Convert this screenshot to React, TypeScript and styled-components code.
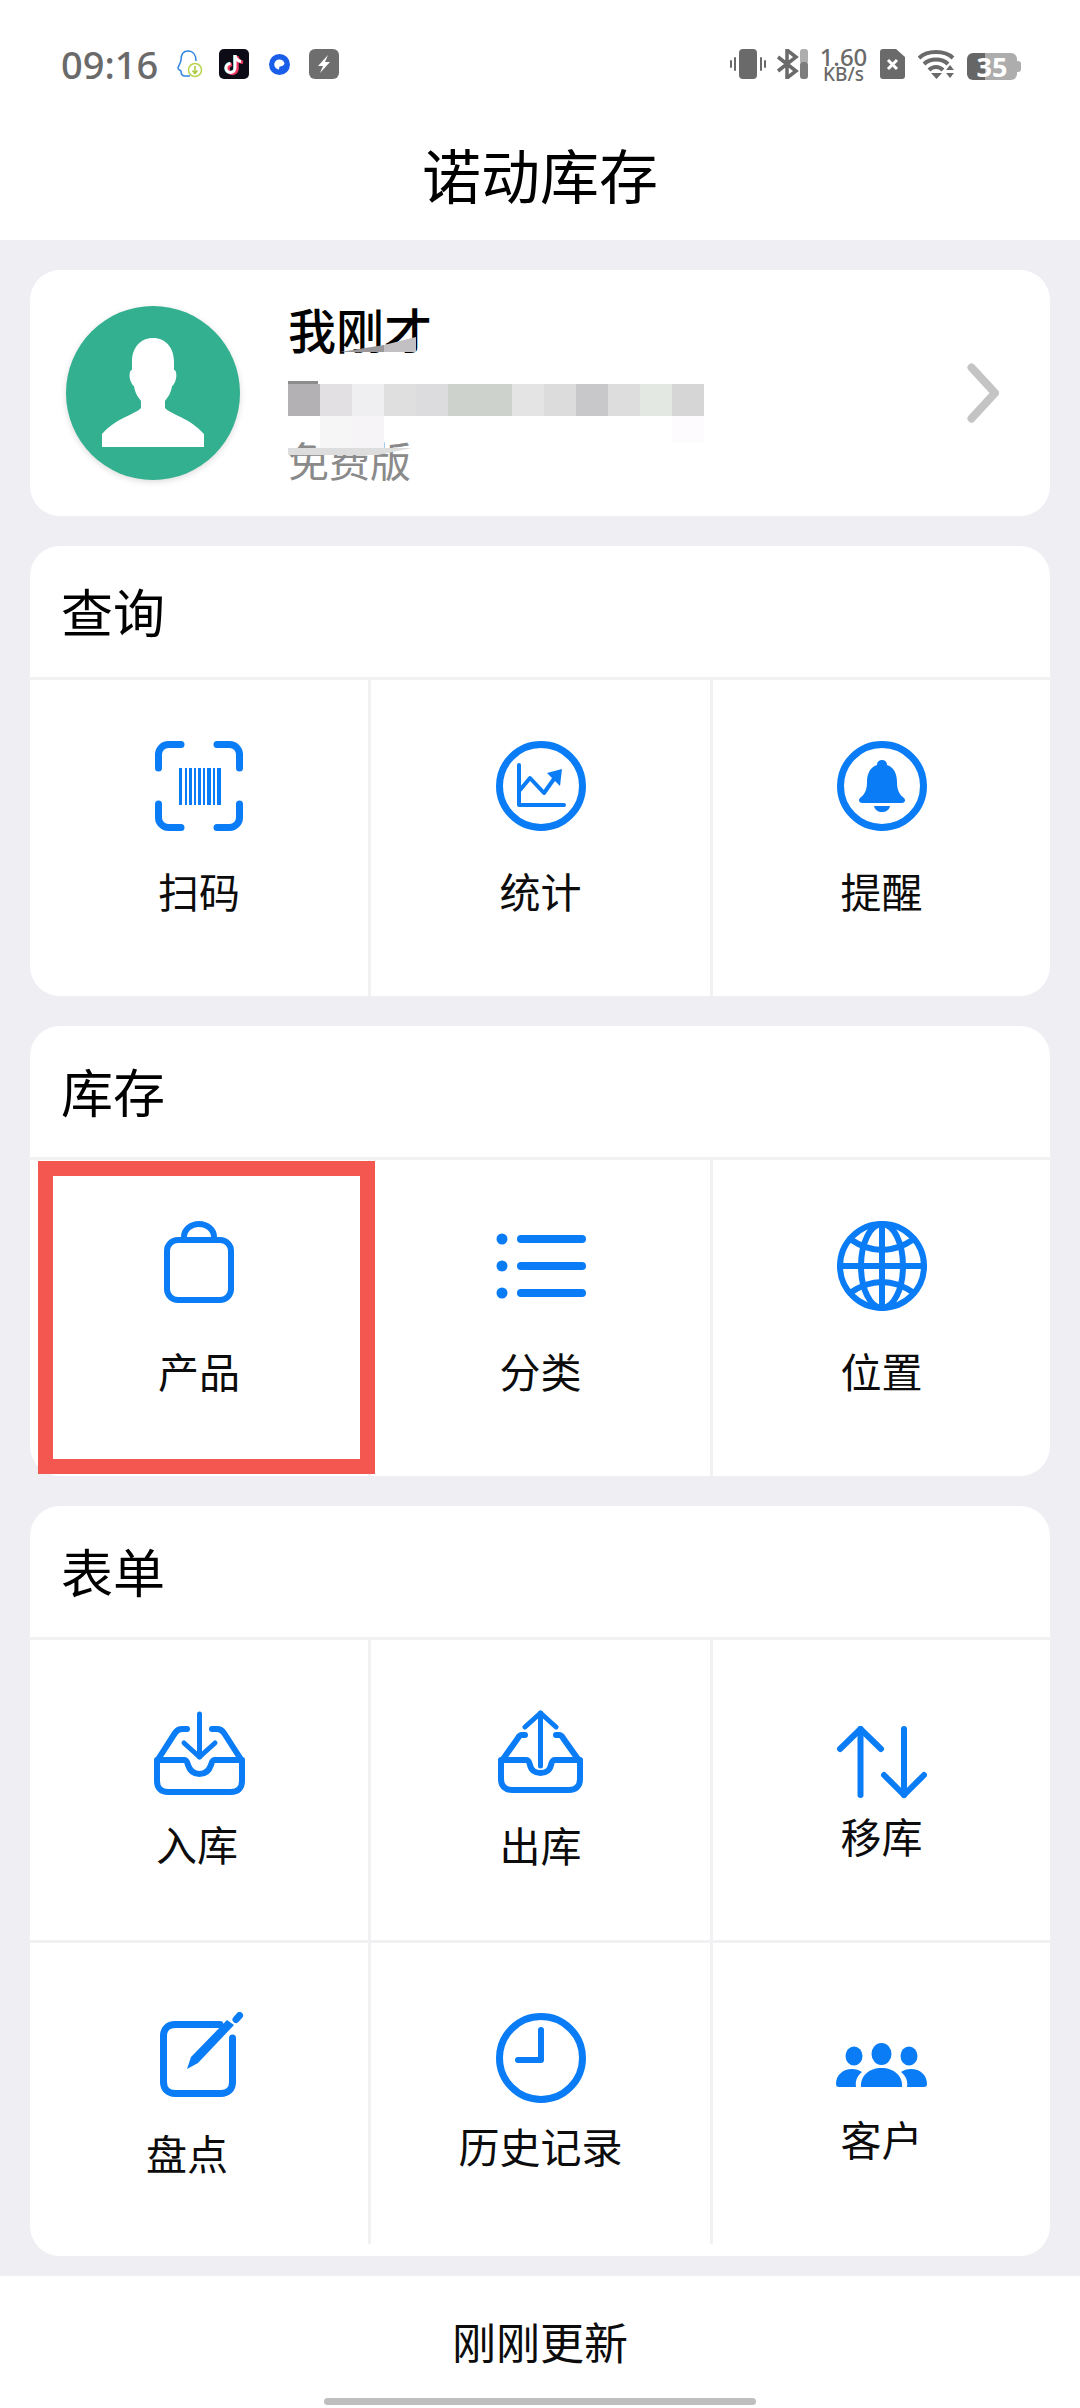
import React from "react";
import styled, { createGlobalStyle } from "styled-components";

const BLUE = "#0a7cf6";
const LINE = "#f1f1f4";
const CJK = `"Noto Sans CJK SC", "Noto Sans", sans-serif`;

const GlobalStyle = createGlobalStyle`
    html, body {
        margin: 0;
        padding: 0;
        background: #fff;
    }
    * {
        box-sizing: border-box;
    }
`;

const PAGE = styled.div`
    width: 1080px;
    height: 2408px;
    overflow: hidden;
    display: flex;
    flex-direction: column;
    background-color: #eeeef3;
    font-family: ${CJK};
    color: #000;
`;

const HEADER = styled.header`
    height: 240px;
    background-color: #fff;
    display: flex;
    flex-direction: column;
`;

const STATUS_BAR = styled.div`
    height: 128px;
    padding: 0 59px 0 61px;
    display: flex;
    align-items: center;
    justify-content: space-between;
    color: #6a6a6a;
    font-family: "Noto Sans", sans-serif;
`;

const STATUS_GROUP = styled.div`
    display: flex;
    align-items: center;
`;

const CLOCK = styled.span`
    font-size: 38px;
    line-height: 34px;
    font-weight: 500;
    width: 97px;
    white-space: nowrap;
`;

const STATUS_ICON = styled.svg<{ $left: number }>`
    display: block;
    flex: none;
    margin-left: ${props => props.$left}px;
`;

const SPEED = styled.div`
    width: 45px;
    margin-left: 13px;
    display: flex;
    flex-direction: column;
    align-items: center;
    font-weight: 500;
    white-space: nowrap;
    .rate {
        font-size: 24px;
        line-height: 20px;
    }
    .unit {
        font-size: 19px;
        line-height: 15px;
    }
`;

const BATTERY = styled.div`
    position: relative;
    width: 50px;
    height: 27px;
    margin-left: 12px;
    margin-right: 4px;
    margin-top: 4px;
    border-radius: 6px;
    background: linear-gradient(90deg, #666 0 36%, #adadad 36% 100%);
    color: #fff;
    font-size: 27px;
    font-weight: 700;
    line-height: 27px;
    text-align: center;
    &::after {
        content: "";
        position: absolute;
        right: -4px;
        top: 8px;
        width: 4px;
        height: 11px;
        border-radius: 0 3px 3px 0;
        background-color: #adadad;
    }
`;

const TITLE = styled.h1`
    margin: 0;
    height: 112px;
    padding-bottom: 22px;
    display: flex;
    align-items: center;
    justify-content: center;
    font-size: 59px;
    font-weight: 400;
`;

const MAIN = styled.main`
    flex: 1;
    padding: 30px 30px 0;
    display: flex;
    flex-direction: column;
    gap: 30px;
`;

const CARD = styled.section`
    position: relative;
    background-color: #fff;
    border-radius: 30px;
`;

const PROFILE = styled(CARD)`
    height: 246px;
    padding: 36px 30px 0 36px;
    display: flex;
    align-items: flex-start;
`;

const AVATAR = styled.div`
    width: 174px;
    height: 174px;
    flex: none;
    border-radius: 50%;
    background-color: #32b08f;
    box-shadow: 0 2px 6px rgba(0, 0, 0, 0.14);
    svg {
        display: block;
    }
`;

const PROFILE_TEXT = styled.div`
    margin-left: 48px;
    margin-top: -8px;
    flex: 1;
    display: flex;
    flex-direction: column;
    .name {
        font-size: 48px;
        line-height: 60px;
        font-weight: 500;
        color: #000;
    }
    .plan {
        margin-top: 76px;
        font-size: 41px;
        line-height: 50px;
        color: #8a8a8a;
    }
`;

const MOSAIC = styled.svg`
    position: absolute;
    left: 258px;
    top: 65px;
`;

const CHEVRON = styled.svg`
    flex: none;
    margin-top: 57px;
    margin-right: 20px;
`;

const SECTION_TITLE = styled.h2`
    margin: 0;
    height: 134px;
    padding: 0 0 3px 31px;
    display: flex;
    align-items: center;
    font-size: 52px;
    font-weight: 400;
    border-bottom: 3px solid ${LINE};
`;

const GRID = styled.div`
    display: grid;
    grid-template-columns: 341px 342px 337px;
`;

const FORM_GRID = styled(GRID)`
    padding-bottom: 12px;
`;

const CELL = styled.div<{ $height: number; $pad: number; $ruled?: boolean; $last?: boolean }>`
    position: relative;
    height: ${props => props.$height}px;
    padding-top: ${props => props.$pad}px;
    display: flex;
    flex-direction: column;
    align-items: center;
    border-right: ${props => (props.$last ? "none" : `3px solid ${LINE}`)};
    border-bottom: ${props => (props.$ruled ? `3px solid ${LINE}` : "none")};
`;

const ICON = styled.svg<{ $nudge?: number }>`
    display: block;
    flex: none;
    margin-left: ${props => props.$nudge || 0}px;
    color: ${BLUE};
`;

const LABEL = styled.span<{ $gap: number; $shift?: number }>`
    margin-top: ${props => props.$gap}px;
    margin-left: ${props => props.$shift || 0}px;
    font-size: 41px;
    line-height: 52px;
    color: #0c0c0c;
    white-space: nowrap;
`;

const HIGHLIGHT = styled.div`
    position: absolute;
    left: 8px;
    top: 1px;
    width: 337px;
    height: 313px;
    border: 15px solid #f4574f;
`;

const FOOTER = styled.footer`
    height: 132px;
    background-color: #fff;
    padding-top: 35px;
    display: flex;
    flex-direction: column;
    align-items: center;
    .updated {
        font-size: 44px;
        line-height: 60px;
        color: #0c0c0c;
    }
`;

const HOME_BAR = styled.div`
    margin-top: 27px;
    width: 432px;
    height: 7px;
    border-radius: 4px;
    background-color: #bfbfbf;
`;

const stroke = { fill: "none", stroke: "currentColor", strokeLinecap: "round" as const, strokeLinejoin: "round" as const };

const ScanIcon = () => (
    <ICON width="88" height="90" viewBox="0 0 88 90">
        <g {...stroke} strokeWidth="7">
            <path d="M3.5 27V14A10 10 0 0 1 13.5 3.5H26" />
            <path d="M62 3.5H74.5A10 10 0 0 1 84.5 14V27" />
            <path d="M3.5 63V76A10 10 0 0 0 13.5 86.5H26" />
            <path d="M62 86.5H74.5A10 10 0 0 0 84.5 76V63" />
        </g>
        <g fill="currentColor">
            <rect x="24" y="27" width="3" height="37" />
            <rect x="30" y="27" width="2" height="37" />
            <rect x="34" y="27" width="3" height="37" />
            <rect x="39" y="27" width="2" height="37" />
            <rect x="43" y="27" width="3" height="37" />
            <rect x="48" y="27" width="2" height="37" />
            <rect x="52" y="27" width="4" height="37" />
            <rect x="58" y="27" width="2" height="37" />
            <rect x="62" y="27" width="4" height="37" />
        </g>
    </ICON>
);

const StatsIcon = () => (
    <ICON width="90" height="90" viewBox="0 0 90 90">
        <circle cx="45" cy="45" r="41.5" {...stroke} strokeWidth="7" />
        <path d="M23 24V64H68" {...stroke} strokeWidth="4" />
        <path d="M24 49L34 37L48 52L60 35" {...stroke} strokeWidth="4" />
        <path d="M51 32L66 28L64 45Z" fill="currentColor" />
    </ICON>
);

const BellIcon = () => (
    <ICON width="90" height="90" viewBox="0 0 90 90">
        <circle cx="45" cy="45" r="41.5" {...stroke} strokeWidth="7" />
        <path
            d="M45 19C48 19 50 21 50 24C57 26 60 33 60 41C60 50 63 54 67 57C69 59 68 62 65 62H25C22 62 21 59 23 57C27 54 30 50 30 41C30 33 33 26 40 24C40 21 42 19 45 19Z"
            fill="currentColor"
        />
        <path d="M37 65H53C52 69 49 71 45 71C41 71 38 69 37 65Z" fill="currentColor" />
    </ICON>
);

const BagIcon = () => (
    <ICON width="70" height="90" viewBox="0 0 70 90">
        <rect x="3" y="19" width="64" height="60" rx="11" {...stroke} strokeWidth="6" />
        <path d="M20 18V16A15 13 0 0 1 50 16V18" {...stroke} strokeWidth="6" />
    </ICON>
);

const ListIcon = () => (
    <ICON width="91" height="90" viewBox="0 0 91 90">
        <g fill="currentColor">
            <circle cx="7" cy="18" r="5.500" />
            <circle cx="7" cy="45" r="5.500" />
            <circle cx="7" cy="72" r="5.500" />
        </g>
        <g {...stroke} strokeWidth="8">
            <path d="M26 18H87" />
            <path d="M26 45H87" />
            <path d="M26 72H87" />
        </g>
    </ICON>
);

const GlobeIcon = () => (
    <ICON width="90" height="90" viewBox="0 0 90 90">
        <g {...stroke} strokeWidth="6">
            <circle cx="45" cy="45" r="42" />
            <ellipse cx="45" cy="45" rx="21" ry="42" />
            <path d="M45 3V87" />
            <path d="M3 45H87" />
            <path d="M13 18Q45 40 77 18" />
            <path d="M13 72Q45 50 77 72" />
        </g>
    </ICON>
);

const InboxIcon = () => (
    <ICON width="91" height="84" viewBox="0 0 91 84">
        <g {...stroke} strokeWidth="6">
            <path d="M33 18H28C25 18 23 19 21 22L3 50V70C3 77 7 81 14 81H77C84 81 88 77 88 70V50L70 22C68 19 66 18 63 18H58" />
            <path d="M3 49H30C33 49 33 51 34 54C36 60 40 63 45.5 63C51 63 55 60 57 54C58 51 58 49 61 49H88" />
        </g>
        <g {...stroke} strokeWidth="5">
            <path d="M45.500 3V46" />
            <path d="M30 32L45.500 46L61 32" />
        </g>
    </ICON>
);

const OutboxIcon = () => (
    <ICON width="85" height="83" viewBox="0 0 85 83">
        <g {...stroke} strokeWidth="6">
            <path d="M27 25H24C22 25 21 26 20 28L3 52V69C3 76 7 80 14 80H71C78 80 82 76 82 69V52L65 28C64 26 63 25 61 25H58" />
            <path d="M3 50H28C31 50 31 52 32 55C33 60 37 63 42.500 63C48 63 52 60 53 55C54 52 54 50 57 50H82" />
        </g>
        <g {...stroke} strokeWidth="5">
            <path d="M42.500 3V56" />
            <path d="M27 17L42.500 3L58 17" />
        </g>
    </ICON>
);

const SwapIcon = () => (
    <ICON width="90" height="72" viewBox="0 0 90 72">
        <g {...stroke} strokeWidth="6">
            <path d="M23.500 3V69" />
            <path d="M3 23L23.500 3L44 23" />
            <path d="M67 3V69" />
            <path d="M47 49L67 69L87 49" />
        </g>
    </ICON>
);

const NoteIcon = () => (
    <ICON width="84" height="85" viewBox="0 0 84 85" $nudge={6}>
        <path d="M60 12.500H15C8 12.500 3.500 17 3.500 24V70C3.500 77 8 81.500 15 81.500H61C68 81.500 72.500 77 72.500 70V26" {...stroke} strokeWidth="7" />
        <path d="M67 8L74 13L38 51L27 57L31 45Z" fill="currentColor" />
        <path d="M76 7.500L79.500 3.500" {...stroke} strokeWidth="7" />
    </ICON>
);

const ClockIcon = () => (
    <ICON width="90" height="90" viewBox="0 0 90 90">
        <circle cx="45" cy="45" r="41.5" {...stroke} strokeWidth="7" />
        <path d="M45 17V47H22" {...stroke} strokeWidth="6" />
    </ICON>
);

const PeopleIcon = () => (
    <ICON width="91" height="44" viewBox="0 0 91 44">
        <g fill="currentColor">
            <ellipse cx="45.500" cy="11" rx="10" ry="11" />
            <ellipse cx="18" cy="13" rx="8.500" ry="9.500" />
            <ellipse cx="73" cy="13" rx="8.500" ry="9.500" />
            <path d="M25 44C24 33 33 25 45.500 25C58 25 67 33 66 44Z" />
            <path d="M0 41C0 32 7 26 16 26C20 26 23 27 26 29C21 33 19 38 20 44H3C1 44 0 43 0 41Z" />
            <path d="M91 41C91 32 84 26 75 26C71 26 68 27 65 29C70 33 72 38 71 44H88C90 44 91 43 91 41Z" />
        </g>
    </ICON>
);

interface ICell {
    label: string;
    icon: React.ReactNode;
    pad: number;
    gap: number;
    shift?: number;
    highlighted?: boolean;
}

const standard = { pad: 61, gap: 33 };

const query: ICell[] = [
    { label: "扫码", icon: <ScanIcon />, ...standard },
    { label: "统计", icon: <StatsIcon />, ...standard },
    { label: "提醒", icon: <BellIcon />, ...standard },
];

const stock: ICell[] = [
    { label: "产品", icon: <BagIcon />, ...standard, highlighted: true },
    { label: "分类", icon: <ListIcon />, ...standard },
    { label: "位置", icon: <GlobeIcon />, ...standard },
];

const forms: ICell[] = [
    { label: "入库", icon: <InboxIcon />, pad: 71, gap: 22, shift: -4 },
    { label: "出库", icon: <OutboxIcon />, pad: 70, gap: 25 },
    { label: "移库", icon: <SwapIcon />, pad: 86, gap: 11 },
    { label: "盘点", icon: <NoteIcon />, pad: 69, gap: 29, shift: -24 },
    { label: "历史记录", icon: <ClockIcon />, pad: 70, gap: 16 },
    { label: "客户", icon: <PeopleIcon />, pad: 100, gap: 25 },
];

const mosaicTop = ["#b3b1b4", "#e3e0e3", "#efeef0", "#dfdfe0", "#dcdcde", "#cdd2cc", "#cdd2cc", "#e3e4e3", "#dcdcdd", "#c8c7ca", "#dcdddc", "#e4e8e3", "#d5d6d5"];

const Mosaic = () => (
    <MOSAIC width="416" height="124" viewBox="0 0 416 124">
        <path d="M52 17L96 10V17Z" fill="#9a979a" />
        <path d="M96 10L128 2V17H96Z" fill="#c2c0c3" />
        <path d="M0 46H30V49H0Z" fill="#8d8d8d" />
        {mosaicTop.map((color, i) => (
            <rect key={i} x={i * 32} y="49" width="32" height="32" fill={color} />
        ))}
        <rect x="32" y="81" width="32" height="32" fill="#f6f6f6" />
        <rect x="64" y="81" width="32" height="32" fill="#f6f4f7" />
        <rect x="384" y="81" width="32" height="27" fill="#fdfbfd" />
        <path d="M0 113H124L90 120H0Z" fill="#dddddd" />
    </MOSAIC>
);

const Cells = ({ items, height }: { items: ICell[]; height: number }) => (
    <>
        {items.map((item, i) => (
            <CELL
                key={item.label}
                $height={items.length > 3 ? (i < 3 ? 303 : 301) : height}
                $pad={item.pad}
                $ruled={items.length > 3 && i < 3}
                $last={i % 3 === 2}
            >
                {item.icon}
                <LABEL $gap={item.gap} $shift={item.shift}>{item.label}</LABEL>
                {item.highlighted && <HIGHLIGHT />}
            </CELL>
        ))}
    </>
);

const App = () => (
    <PAGE>
        <GlobalStyle />
        <HEADER>
            <STATUS_BAR>
                <STATUS_GROUP>
                    <CLOCK>09:16</CLOCK>
                    <STATUS_ICON $left={19} width="26" height="30" viewBox="0 0 26 30">
                        <path d="M11 2C5 2 4 7 4 11C4 14 1 17 1 19C1 21 3 21 4 22C4 25 5 27 8 27H13" fill="none" stroke="#2f86e0" strokeWidth="1.500" />
                        <path d="M11 2C16 2 19 6 19 12" fill="none" stroke="#2f86e0" strokeWidth="1.500" />
                        <circle cx="18" cy="21" r="6.500" fill="#fff" stroke="#b9d44f" strokeWidth="1.500" />
                        <path d="M18 17V24M15.500 21.500L18 24.500L20.500 21.500" fill="none" stroke="#a9c93f" strokeWidth="1.500" />
                    </STATUS_ICON>
                    <STATUS_ICON $left={16} width="30" height="30" viewBox="0 0 30 30">
                        <rect width="30" height="30" rx="5" fill="#0d0b16" />
                        <path d="M17 6V19A4.500 4.500 0 1 1 12 14.500" fill="none" stroke="#4fe3e6" strokeWidth="3.500" transform="translate(-1 0)" />
                        <path d="M17 6V19A4.500 4.500 0 1 1 12 14.500M17 7C18 10 20 12 23 12.500" fill="none" stroke="#f2395f" strokeWidth="3.500" transform="translate(1 1)" />
                        <path d="M16 6V19A4.500 4.500 0 1 1 11.500 14.500M16 7C17 10 19 12 22 12.500" fill="none" stroke="#fff" strokeWidth="3" />
                    </STATUS_ICON>
                    <STATUS_ICON $left={20} width="21" height="21" viewBox="0 0 21 21">
                        <circle cx="10.500" cy="10.500" r="10.500" fill="#1a5de8" />
                        <path d="M10.500 5.500A5 5 0 1 0 10 15.500L10.500 12.500C12 13 15 11.500 15.500 9.500C15 7 13 5.500 10.500 5.500Z" fill="#fff" />
                    </STATUS_ICON>
                    <STATUS_ICON $left={19} width="30" height="30" viewBox="0 0 30 30">
                        <rect width="30" height="30" rx="6" fill="#6e6e6e" />
                        <path d="M19 6L9 17H14L11 24L21 13H16Z" fill="#fff" />
                    </STATUS_ICON>
                </STATUS_GROUP>
                <STATUS_GROUP>
                    <STATUS_ICON $left={0} width="36" height="30" viewBox="0 0 36 30">
                        <rect x="9" width="18" height="30" rx="4" fill="#6a6a6a" />
                        <rect x="4" y="8" width="2" height="14" rx="1" fill="#6a6a6a" />
                        <rect x="0" y="11" width="2" height="8" rx="1" fill="#6a6a6a" />
                        <rect x="30" y="8" width="2" height="14" rx="1" fill="#6a6a6a" />
                        <rect x="34" y="11" width="2" height="8" rx="1" fill="#6a6a6a" />
                    </STATUS_ICON>
                    <STATUS_ICON $left={10} width="32" height="30" viewBox="0 0 32 30">
                        <path d="M2 8L20 22L11 29V1L20 8L2 22" fill="none" stroke="#6a6a6a" strokeWidth="3.500" />
                        <rect x="24" width="8" height="15" fill="#adadad" rx="3" />
                        <rect x="24" y="13" width="8" height="17" fill="#7d7d7d" rx="3" />
                    </STATUS_ICON>
                    <SPEED>
                        <span className="rate">1.60</span>
                        <span className="unit">KB/s</span>
                    </SPEED>
                    <STATUS_ICON $left={14} width="25" height="30" viewBox="0 0 25 30">
                        <path d="M3 0H16L25 8V27A3 3 0 0 1 22 30H3A3 3 0 0 1 0 27V3A3 3 0 0 1 3 0Z" fill="#6a6a6a" />
                        <path d="M8 11L17 20M17 11L8 20" stroke="#fff" strokeWidth="3" />
                    </STATUS_ICON>
                    <STATUS_ICON $left={13} width="37" height="30" viewBox="0 0 37 30">
                        <g fill="none" stroke="#6a6a6a" strokeWidth="4">
                            <path d="M1 9C9 1 27 1 35 9" />
                            <path d="M6 15C12 9 24 9 30 15" />
                            <path d="M11 21C15 17 21 17 25 21" />
                        </g>
                        <path d="M13 24H24L18.500 30Z" fill="#6a6a6a" />
                        <path d="M28 21H36L32 16Z" fill="#6a6a6a" />
                        <path d="M28 24H36L32 29Z" fill="#6a6a6a" />
                    </STATUS_ICON>
                    <BATTERY>35</BATTERY>
                </STATUS_GROUP>
            </STATUS_BAR>
            <TITLE>诺动库存</TITLE>
        </HEADER>
        <MAIN>
            <PROFILE>
                <AVATAR>
                    <svg width="174" height="174" viewBox="0 0 174 174">
                        <path
                            d="M87 32C74 32 66 42 66 56V64C63 64 63 72 65 76C66 78 67 80 68 80C69 88 73 92 75 95V102C70 108 50 112 36 128V141H138V128C124 112 104 108 99 102V95C101 92 105 88 106 80C107 80 108 78 109 76C111 72 111 64 108 64V56C108 42 100 32 87 32Z"
                            fill="#fff"
                        />
                    </svg>
                </AVATAR>
                <PROFILE_TEXT>
                    <span className="name">我刚才</span>
                    <span className="plan">免费版</span>
                </PROFILE_TEXT>
                <CHEVRON width="33" height="60" viewBox="0 0 33 60">
                    <path d="M4.500 4.500L28 30L4.500 55.500" fill="none" stroke="#c4c4c4" strokeWidth="8" strokeLinecap="round" strokeLinejoin="round" />
                </CHEVRON>
                <Mosaic />
            </PROFILE>
            <CARD>
                <SECTION_TITLE>查询</SECTION_TITLE>
                <GRID>
                    <Cells items={query} height={316} />
                </GRID>
            </CARD>
            <CARD>
                <SECTION_TITLE>库存</SECTION_TITLE>
                <GRID>
                    <Cells items={stock} height={316} />
                </GRID>
            </CARD>
            <CARD>
                <SECTION_TITLE>表单</SECTION_TITLE>
                <FORM_GRID>
                    <Cells items={forms} height={303} />
                </FORM_GRID>
            </CARD>
        </MAIN>
        <FOOTER>
            <span className="updated">刚刚更新</span>
            <HOME_BAR />
        </FOOTER>
    </PAGE>
);

export default App;
